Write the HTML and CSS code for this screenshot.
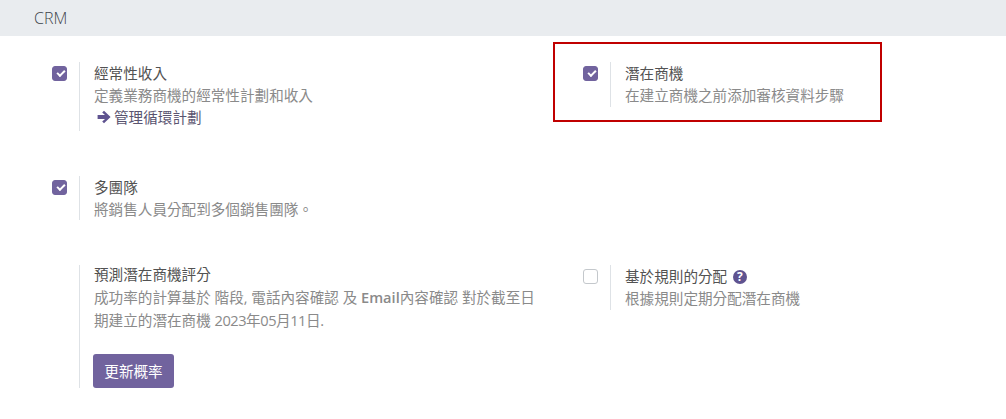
FILE: index.html
```html
<!DOCTYPE html>
<html lang="zh-Hant">
<head>
    <meta charset="UTF-8">
    <title>CRM</title>
    <link rel="stylesheet" href="styles.css">
</head>
<body>
    <div class="title">CRM</div>

    <div class="settings">
        <div class="setting row1">
            <div class="left"><span class="check on"></span></div>
            <div class="right">
                <div class="label">經常性收入</div>
                <div class="help">定義業務商機的經常性計劃和收入</div>
                <a class="link"><svg class="arrow" viewBox="0 0 14 14"><path d="M7 .8 L13.6 7 L7 13.2 L5.2 11.4 L8 8.9 H.6 V5.1 H8 L5.2 2.6 Z"/></svg>管理循環計劃</a>
            </div>
        </div>
        <div class="setting row1">
            <div class="left"><span class="check on"></span></div>
            <div class="right short">
                <div class="label">潛在商機</div>
                <div class="help">在建立商機之前添加審核資料步驟</div>
            </div>
        </div>

        <div class="setting row2">
            <div class="left"><span class="check on"></span></div>
            <div class="right">
                <div class="label">多團隊</div>
                <div class="help">將銷售人員分配到多個銷售團隊。</div>
            </div>
        </div>
        <div class="setting row2"></div>

        <div class="setting">
            <div class="left"></div>
            <div class="right">
                <div class="label pull">預測潛在商機評分</div>
                <div class="help wide">成功率的計算基於 階段, 電話內容確認 及 <b>Email</b>內容確認 對於截至日<br>期建立的潛在商機 <span class="date">2023年05月11日.</span></div>
                <button class="btn">更新概率</button>
            </div>
        </div>
        <div class="setting">
            <div class="left"><span class="check"></span></div>
            <div class="right short">
                <div class="label">基於規則的分配 <span class="tip">?</span></div>
                <div class="help">根據規則定期分配潛在商機</div>
            </div>
        </div>
    </div>

    <div class="mark"></div>
</body>
</html>
```

FILE: styles.css
```css
*{
    margin: 0px;
    padding: 0px;
    box-sizing: border-box;
}

body{
    position: relative;
    height: 419px;
    overflow: hidden;
    background-color: white;
    font-family: "Open Sans", "Noto Sans CJK TC", sans-serif;
    font-size: 14.6px;
    line-height: 22px;
    color: #4c4c4c;
}

.title{
    height: 36px;
    padding-left: 34px;
    background-color: #e9ecef;
    font-size: 16px;
    font-weight: 300;
    line-height: 36px;
    color: #3d444b;
}

.settings{
    display: grid;
    grid-template-columns: 531px 396px;
    margin-left: 52px;
    padding-top: 26px;
}

.setting{
    display: flex;
    align-items: flex-start;
    margin-bottom: 45px;
}

.row1{
    height: 69px;
}

.row2{
    height: 44px;
}

.setting .left{
    width: 27px;
    flex-shrink: 0;
    padding-top: 4px;
}

.setting .right{
    align-self: stretch;
    flex: 1;
    padding-left: 14px;
    border-left: 1px solid #dee2e6;
}

.setting .right.short{
    align-self: flex-start;
    height: 45px;
}

.check{
    display: block;
    position: relative;
    width: 15px;
    height: 15px;
    border: 1px solid #c4c8cc;
    border-radius: 3px;
    background-color: white;
}

.check.on{
    background-color: #71639e;
    border-color: #71639e;
}

.check.on::after{
    content: "";
    position: absolute;
    left: 3.5px;
    top: 3px;
    width: 6px;
    height: 3px;
    border-left: 2px solid white;
    border-bottom: 2px solid white;
    transform: rotate(-45deg);
}

.label{
    color: #525252;
}

.label.pull{
    margin-top: -2px;
    margin-bottom: 1px;
}

.help{
    color: #8a8a8a;
}

.help.wide{
    line-height: 23px;
}

.help b{
    font-weight: 600;
}

.date{
    letter-spacing: -0.45px;
}

.link{
    display: flex;
    align-items: center;
    color: #5a5470;
}

.arrow{
    width: 14px;
    height: 14px;
    margin: 0px 3px 0px 3px;
    fill: #5f5390;
}

.tip{
    display: inline-block;
    width: 14px;
    height: 14px;
    margin-left: 2px;
    border-radius: 50%;
    background-color: #5f5390;
    color: white;
    font-size: 12px;
    font-weight: bold;
    line-height: 14px;
    text-align: center;
    vertical-align: 1px;
}

.btn{
    display: block;
    width: 81px;
    height: 34px;
    margin-top: 22px;
    margin-left: -1px;
    border: none;
    border-radius: 3px;
    background-color: #71639e;
    color: white;
    font: inherit;
}

/* red annotation over the second setting */
.mark{
    position: absolute;
    left: 553px;
    top: 42px;
    width: 329px;
    height: 80px;
    border: 2px solid #c00000;
}
```
